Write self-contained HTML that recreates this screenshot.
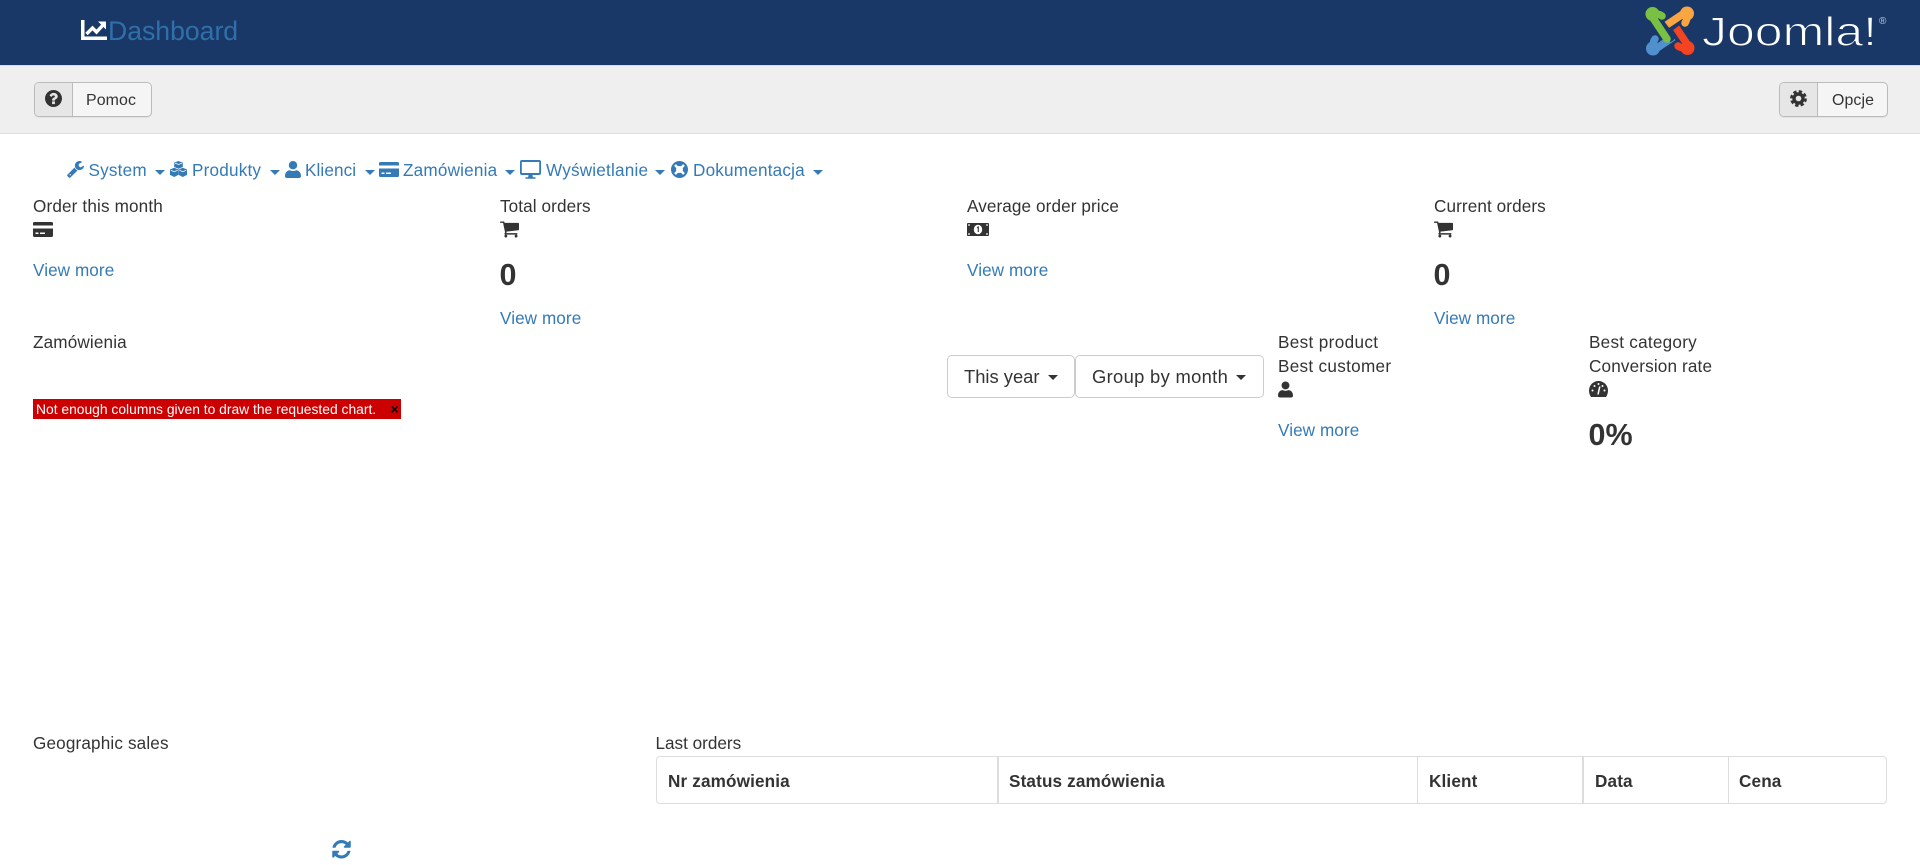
<!DOCTYPE html>
<html lang="pl">
<head>
<meta charset="utf-8">
<title>Dashboard</title>
<style>
html,body{margin:0;padding:0;background:#fff}
body{position:relative;width:1920px;height:865px;overflow:hidden;font-family:"Liberation Sans",Arial,sans-serif;color:#333;filter:blur(.35px)}
.t{position:absolute;font-size:17.14px;line-height:20px;white-space:nowrap;letter-spacing:.15px}
.t.l{letter-spacing:.08px}
.l{color:#337ab7}
.b0{position:absolute;font-size:30.5px;line-height:35px;font-weight:700;white-space:nowrap}
.th{position:absolute;top:771px;font-size:17.14px;line-height:20px;font-weight:700;white-space:nowrap;letter-spacing:.15px}
.c{position:absolute;width:0;height:0;border-left:5px solid transparent;border-right:5px solid transparent;border-top:5px solid #337ab7;top:170px}
svg{position:absolute;display:block;overflow:visible}
.d{position:absolute;background:#fff;border:1.5px solid #ccc;border-radius:5px;box-sizing:border-box;top:355px;height:43px}
.dt{position:absolute;top:366px;font-size:18.37px;line-height:21px;white-space:nowrap}
.dc{position:absolute;top:375px;width:0;height:0;border-left:5px solid transparent;border-right:5px solid transparent;border-top:5px solid #333}
.tb{position:absolute;top:82px;height:35px;box-sizing:border-box;border:1.5px solid #bbb;border-radius:5px;background:#f5f5f5;box-shadow:0 1px 1px rgba(0,0,0,.06)}
.tbi{position:absolute;left:0;top:0;bottom:0;background:#e6e6e6;border-right:1.5px solid #bbb;border-radius:4px 0 0 4px}
.tbt{position:absolute;top:92px;font-size:15.92px;line-height:17px;white-space:nowrap;color:#333;letter-spacing:.1px}
.v{position:absolute;top:756px;width:1.5px;height:47px;background:#ddd}
</style>
</head>
<body>
<!-- header -->
<div style="position:absolute;left:0;top:0;width:1920px;height:65px;background:#1a3867"></div>
<div style="position:absolute;left:0;top:65px;width:1920px;height:69px;background:#efefef;border-top:1px solid #d5dbe3;border-bottom:1.5px solid #ddd;box-sizing:border-box"></div>

<svg style="left:81px;top:20px" width="26" height="20" viewBox="0 0 26 20">
<path d="M0 0h3.500v16.500H26V20H0z" fill="#fff"/>
<path d="M5.500 14l6-6 4 4 6.500-7" fill="none" stroke="#fff" stroke-width="3.400"/>
<path d="M17 1.500h8v8z" fill="#fff"/>
</svg>
<div style="position:absolute;left:108px;top:17px;font-size:26.6px;line-height:28px;color:#2f70aa;white-space:nowrap">Dashboard</div>

<!-- joomla logo -->
<svg style="left:1669.500px;top:30.500px" width="1" height="1" viewBox="0 0 1 1">
<g stroke-linecap="round" stroke-linejoin="round" fill="none" stroke-width="7.500">
<g transform="rotate(270)"><path d="M-8-15Q-14-19-17-13L-3 8" stroke="#5091cd"/><circle cx="-17.500" cy="-17" r="7" fill="#5091cd" stroke="none"/></g>
<g transform="rotate(180)"><path d="M-12-10L0 6" stroke="#1a3867" stroke-width="9.500"/><path d="M-8-15Q-14-19-17-13L-3 8" stroke="#f44321"/><circle cx="-17.500" cy="-17" r="7" fill="#f44321" stroke="none"/></g>
<g transform="rotate(90)"><path d="M-12-10L0 6" stroke="#1a3867" stroke-width="9.500"/><path d="M-8-15Q-14-19-17-13L-3 8" stroke="#f9a541"/><circle cx="-17.500" cy="-17" r="7" fill="#f9a541" stroke="none"/></g>
<g><path d="M-12-10L0 6" stroke="#1a3867" stroke-width="9.500"/><path d="M-8-15Q-14-19-17-13L-3 8" stroke="#7ac143"/><circle cx="-17.500" cy="-17" r="7" fill="#7ac143" stroke="none"/></g>
</g>
</svg>
<svg style="left:1700px;top:8px" width="190" height="44" viewBox="0 0 190 44">
<text x="2" y="37.500" font-family="Liberation Sans" font-size="40.500" fill="#fff" stroke="#1a3867" stroke-width="1" textLength="175" lengthAdjust="spacingAndGlyphs">Joomla!</text>
<text x="179" y="16" font-family="Liberation Sans" font-size="10" fill="#c2cddd">®</text>
</svg>

<!-- toolbar -->
<div class="tb" style="left:34px;width:118px"><div class="tbi" style="width:37px"></div></div>
<svg style="left:45px;top:90px" width="17" height="17" viewBox="128 128 1536 1536"><path fill="#333" d="M1024 1376v-192q0-14-9-23t-23-9h-192q-14 0-23 9t-9 23v192q0 14 9 23t23 9h192q14 0 23-9t9-23zm256-672q0-88-55.500-163t-138.500-116-170-41q-243 0-371 213-15 24 8 42l132 100q7 6 19 6 16 0 25-12 53-68 86-92 34-24 86-24 48 0 85.500 26t37.500 59q0 38-20 61t-68 45q-63 28-115.500 86.500t-52.500 125.500v36q0 14 9 23t23 9h192q14 0 23-9t9-23q0-19 21.500-49.500t54.500-49.500q32-18 49-28.500t46-35 44.500-48 28-60.500 12.500-81zm384 192q0 209-103 385.500t-279.500 279.500-385.500 103-385.500-103-279.500-279.500-103-385.500 103-385.500 279.500-279.500 385.500-103 385.500 103 279.500 279.500 103 385.500z"/></svg>
<div class="tbt" style="left:86px">Pomoc</div>

<div class="tb" style="left:1779px;width:109px"><div class="tbi" style="width:37px"></div></div>
<svg style="left:1790px;top:90px" width="17" height="17" viewBox="0 0 17 17">
<circle cx="8.500" cy="8.500" r="4.500" fill="none" stroke="#333" stroke-width="3.400"/>
<circle cx="8.500" cy="8.500" r="7" fill="none" stroke="#333" stroke-width="2.800" stroke-dasharray="3.300 2.200"/>
</svg>
<div class="tbt" style="left:1832px">Opcje</div>

<!-- nav -->
<svg style="left:67px;top:161px" width="17" height="17" viewBox="64 128 1664 1664"><path fill="#337ab7" d="M448 1472q0-26-19-45t-45-19-45 19-19 45 19 45 45 19 45-19 19-45zm644-420l-682 682q-37 37-90 37-52 0-91-37l-106-108q-38-36-38-90 0-53 38-91l681-681q39 98 114.500 173.500t173.500 114.500zm634-435q0 39-23 106-47 134-164.500 217.500t-258.500 83.500q-185 0-316.500-131.500t-131.500-316.500 131.500-316.500 316.500-131.500q58 0 121.500 16.500t107.500 46.500q16 11 16 28t-16 28l-293 169v224l193 107q5-3 79-48.500t135.500-81 70.500-35.500q15 0 23.500 10t8.500 25z"/></svg>
<div class="t l" style="left:88.500px;top:160px;letter-spacing:.2px">System</div>
<div class="c" style="left:155px"></div>

<svg style="left:170px;top:161px" width="17" height="16" viewBox="0 0 17 16" fill="#337ab7">
<path d="M8.500 0l4.300 1.600v4.400l-4.300 1.800-4.300-1.800V1.600z"/>
<path d="M4.200 6.800l4.200 1.700v5.400l-4.200 2.100L0 13.900V8.500z"/>
<path d="M12.800 6.800L17 8.500v5.400l-4.200 2.100-4.200-2.100V8.500z"/>
<path d="M5 2.100l3.500 1.400L12 2.100M.8 9.300l3.400 1.400 3.400-1.400M9.400 9.300l3.400 1.400 3.400-1.400" fill="none" stroke="#fff" stroke-width=".8"/>
</svg>
<div class="t l" style="left:192px;top:160px;letter-spacing:.2px">Produkty</div>
<div class="c" style="left:270px"></div>

<svg style="left:285px;top:161px" width="16" height="17" viewBox="0 0 16 17" fill="#337ab7">
<circle cx="8" cy="4.200" r="4.200"/><path d="M0 15c0-3.800 2.500-5.800 5-5.800 1 .5 2 .8 3 .8s2-.3 3-.8c2.500 0 5 2 5 5.800 0 1.300-.8 2-2 2H2c-1.200 0-2-.7-2-2z"/>
</svg>
<div class="t l" style="left:305px;top:160px;letter-spacing:.1px">Klienci</div>
<div class="c" style="left:365px"></div>

<svg style="left:379px;top:162px" width="20" height="15" viewBox="0 0 20 15" fill="#337ab7">
<path d="M1.500 0h17A1.500 1.500 0 0 1 20 1.500V3.500H0V1.500A1.500 1.500 0 0 1 1.500 0zM0 6.500h20v7a1.500 1.500 0 0 1-1.500 1.500h-17A1.500 1.500 0 0 1 0 13.500zM2.500 10.500v1.500h3v-1.500zM7 10.500v1.500h5v-1.500z" fill-rule="evenodd"/>
</svg>
<div class="t l" style="left:403px;top:160px;letter-spacing:.2px">Zamówienia</div>
<div class="c" style="left:505px"></div>

<svg style="left:520px;top:160px" width="21" height="19" viewBox="0 0 21 19" fill="#337ab7">
<path fill-rule="evenodd" d="M2 0h17a2 2 0 0 1 2 2v11a2 2 0 0 1-2 2H2a2 2 0 0 1-2-2V2a2 2 0 0 1 2-2zm-.200 2v11h17.400V2z"/>
<path d="M8.500 15h4l.4 2.200H8.100zM5.500 17.200h10v1.500h-10z"/>
</svg>
<div class="t l" style="left:546px;top:160px;letter-spacing:.2px">Wyświetlanie</div>
<div class="c" style="left:655px"></div>

<svg style="left:671px;top:161px" width="17" height="17" viewBox="0 0 17 17">
<circle cx="8.500" cy="8.500" r="8.500" fill="#337ab7"/>
<path d="M4 4l2.500 2.500M13 4l-2.500 2.500M4 13l2.500-2.500M13 13l-2.500-2.500" stroke="#fff" stroke-width="2.600"/>
<circle cx="8.500" cy="8.500" r="3.500" fill="#fff"/>
</svg>
<div class="t l" style="left:693px;top:160px;letter-spacing:.2px">Dokumentacja</div>
<div class="c" style="left:813px"></div>

<!-- row 1 -->
<div class="t" style="left:33px;top:196px">Order this month</div>
<svg style="left:33px;top:222px" width="20" height="15" viewBox="0 0 20 15" fill="#333">
<path fill-rule="evenodd" d="M1.500 0h17A1.500 1.500 0 0 1 20 1.500V3.500H0V1.500A1.500 1.500 0 0 1 1.500 0zM0 6.500h20v7a1.500 1.500 0 0 1-1.500 1.500h-17A1.500 1.500 0 0 1 0 13.500zM2.500 10.500v1.500h3v-1.500zM7 10.500v1.500h5v-1.500z"/>
</svg>
<div class="t l" style="left:33px;top:260px">View more</div>

<div class="t" style="left:500px;top:196px;letter-spacing:.1px">Total orders</div>
<svg style="left:500px;top:221px" width="19" height="17" viewBox="64 256 1664 1408"><path fill="#333" d="M704 1536q0 52-38 90t-90 38-90-38-38-90 38-90 90-38 90 38 38 90zm896 0q0 52-38 90t-90 38-90-38-38-90 38-90 90-38 90 38 38 90zm128-1088v512q0 24-16.500 42.500t-40.500 21.500l-1044 122q13 60 13 70 0 16-24 64h920q26 0 45 19t19 45-19 45-45 19h-1024q-26 0-45-19t-19-45q0-11 8-31.500t16-36 21.500-40 15.500-29.500l-177-823h-204q-26 0-45-19t-19-45 19-45 45-19h256q16 0 28.500 6.500t19.500 15.500 13 24.500 8 26 5.500 29.500 4.500 26h1201q26 0 45 19t19 45z"/></svg>
<div class="b0" style="left:499.500px;top:258px">0</div>
<div class="t l" style="left:500px;top:308px">View more</div>

<div class="t" style="left:967px;top:196px;letter-spacing:.1px">Average order price</div>
<svg style="left:967px;top:223px" width="22" height="13" viewBox="0 0 22 13">
<rect width="22" height="13" rx="1" fill="#333"/>
<ellipse cx="11" cy="6.500" rx="4.200" ry="4.800" fill="#fff"/>
<path d="M10 4.800l1.300-.8v5" stroke="#333" stroke-width="1.100" fill="none"/>
<g fill="#fff"><circle cx="2" cy="2" r=".9"/><circle cx="20" cy="2" r=".9"/><circle cx="2" cy="11" r=".9"/><circle cx="20" cy="11" r=".9"/></g>
</svg>
<div class="t l" style="left:967px;top:260px">View more</div>

<div class="t" style="left:1434px;top:196px;letter-spacing:.1px">Current orders</div>
<svg style="left:1434px;top:221px" width="19" height="17" viewBox="64 256 1664 1408"><path fill="#333" d="M704 1536q0 52-38 90t-90 38-90-38-38-90 38-90 90-38 90 38 38 90zm896 0q0 52-38 90t-90 38-90-38-38-90 38-90 90-38 90 38 38 90zm128-1088v512q0 24-16.500 42.500t-40.500 21.500l-1044 122q13 60 13 70 0 16-24 64h920q26 0 45 19t19 45-19 45-45 19h-1024q-26 0-45-19t-19-45q0-11 8-31.500t16-36 21.500-40 15.500-29.500l-177-823h-204q-26 0-45-19t-19-45 19-45 45-19h256q16 0 28.500 6.500t19.500 15.500 13 24.500 8 26 5.500 29.500 4.500 26h1201q26 0 45 19t19 45z"/></svg>
<div class="b0" style="left:1433.500px;top:258px">0</div>
<div class="t l" style="left:1434px;top:308px">View more</div>

<!-- chart area -->
<div class="t" style="left:33px;top:332px">Zamówienia</div>
<div style="position:absolute;left:33px;top:399px;width:368px;height:20px;background:#c00;color:#fff;font-size:13.85px;line-height:20px;white-space:nowrap"><span style="position:absolute;left:3px;top:0">Not enough columns given to draw the requested chart.</span><span style="position:absolute;left:357.500px;top:0;color:#000;font-size:14px;font-weight:700;line-height:20px">×</span></div>

<div class="d" style="left:947px;width:128px"></div>
<div class="dt" style="left:964px">This year</div>
<div class="dc" style="left:1047.500px"></div>
<div class="d" style="left:1075px;width:189px"></div>
<div class="dt" style="left:1092px;letter-spacing:.32px">Group by month</div>
<div class="dc" style="left:1236px"></div>

<div class="t" style="left:1278px;top:332px;letter-spacing:.35px">Best product</div>
<div class="t" style="left:1278px;top:356px;letter-spacing:.3px">Best customer</div>
<svg style="left:1278px;top:381px" width="15" height="17" viewBox="0 0 16 17" fill="#333">
<circle cx="8" cy="4.200" r="4.200"/><path d="M0 15c0-3.800 2.500-5.800 5-5.800 1 .5 2 .8 3 .8s2-.3 3-.8c2.500 0 5 2 5 5.800 0 1.300-.8 2-2 2H2c-1.200 0-2-.7-2-2z"/>
</svg>
<div class="t l" style="left:1278px;top:420px">View more</div>

<div class="t" style="left:1589px;top:332px;letter-spacing:.25px">Best category</div>
<div class="t" style="left:1589px;top:356px">Conversion rate</div>
<svg style="left:1589px;top:381px" width="19" height="16" viewBox="0 0 19 16">
<path d="M9.500 0a9.500 9.500 0 0 1 9.500 9.500c0 2.400-.7 4.600-2 6.500H2C.7 14.100 0 11.900 0 9.500A9.500 9.500 0 0 1 9.500 0z" fill="#333"/>
<path d="M9 13.500l1.800-8" stroke="#fff" stroke-width="1.500"/>
<g fill="#fff"><circle cx="3.500" cy="9.500" r="1"/><circle cx="5.500" cy="5" r="1"/><circle cx="9.500" cy="3" r="1"/><circle cx="13.500" cy="5" r="1"/><circle cx="15.500" cy="9.500" r="1"/></g>
</svg>
<div class="b0" style="left:1588.500px;top:418px">0%</div>

<!-- bottom -->
<div class="t" style="left:33px;top:733px">Geographic sales</div>
<svg style="left:332px;top:840px" width="19" height="18.500" viewBox="128 128 1536 1536"><path fill="#337ab7" d="M1639 1056q0 5-1 7-64 268-268 434.500t-478 166.500q-146 0-282.500-55t-243.500-157l-129 129q-19 19-45 19t-45-19-19-45v-448q0-26 19-45t45-19h448q26 0 45 19t19 45-19 45l-137 137q71 66 161 102t187 36q134 0 250-65t186-179q11-17 53-117 8-23 30-23h192q13 0 22.500 9.500t9.500 22.500zm25-800v448q0 26-19 45t-45 19h-448q-26 0-45-19t-19-45 19-45l138-138q-148-137-349-137-134 0-250 65t-186 179q-11 17-53 117-8 23-30 23h-199q-13 0-22.500-9.500t-9.500-22.500v-7q65-268 270-434.500t480-166.500q146 0 284 55.500t245 156.500l130-129q19-19 45-19t45 19 19 45z"/></svg>

<div class="t" style="left:655.500px;top:733px;letter-spacing:0">Last orders</div>
<div style="position:absolute;left:655.500px;top:756px;width:1231px;height:48px;box-sizing:border-box;border:1.5px solid #ddd;border-radius:4px"></div>
<div class="v" style="left:997px"></div>
<div class="v" style="left:1416.500px"></div>
<div class="v" style="left:1582px"></div>
<div class="v" style="left:1727.500px"></div>
<div class="th" style="left:668px">Nr zamówienia</div>
<div class="th" style="left:1009px">Status zamówienia</div>
<div class="th" style="left:1429px">Klient</div>
<div class="th" style="left:1595px">Data</div>
<div class="th" style="left:1739px">Cena</div>
</body>
</html>
